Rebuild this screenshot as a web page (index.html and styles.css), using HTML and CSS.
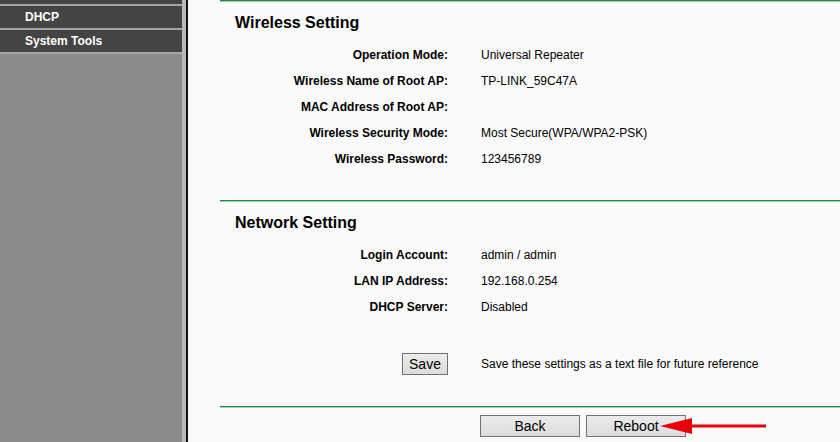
FILE: index.html
```html
<!DOCTYPE html>
<html>
<head>
<meta charset="utf-8">
<link rel="stylesheet" href="styles.css">
</head>
<body>
<div class="page">
  <div class="sidebar">
    <div class="menu-item stub"></div>
    <div class="menu-item">DHCP</div>
    <div class="menu-item">System Tools</div>
  </div>
  <div class="strip"></div>
  <div class="divider"></div>
  <div class="content">
    <section class="section s1">
      <h2 class="heading">Wireless Setting</h2>
      <div class="rows">
        <div class="label">Operation Mode:</div><div class="value">Universal Repeater</div>
        <div class="label">Wireless Name of Root AP:</div><div class="value">TP-LINK_59C47A</div>
        <div class="label">MAC Address of Root AP:</div><div class="value"></div>
        <div class="label">Wireless Security Mode:</div><div class="value">Most Secure(WPA/WPA2-PSK)</div>
        <div class="label">Wireless Password:</div><div class="value">123456789</div>
      </div>
    </section>
    <section class="section s2">
      <h2 class="heading">Network Setting</h2>
      <div class="rows">
        <div class="label">Login Account:</div><div class="value">admin / admin</div>
        <div class="label">LAN IP Address:</div><div class="value">192.168.0.254</div>
        <div class="label">DHCP Server:</div><div class="value">Disabled</div>
      </div>
      <div class="rows save-row">
        <div class="label"><button class="btn save">Save</button></div><div class="value">Save these settings as a text file for future reference</div>
      </div>
    </section>
    <section class="section s3">
      <button class="btn wide">Back</button>
      <button class="btn wide">Reboot</button>
      <svg class="arrow" width="110" height="20" viewBox="0 0 110 20">
        <polygon points="0,10 32,2 32,18" fill="#e8000a"/>
        <rect x="30" y="8.5" width="76" height="3" fill="#e8000a"/>
      </svg>
    </section>
  </div>
</div>
</body>
</html>
```

FILE: styles.css
```css
html, body {
  margin: 0;
  padding: 0;
  background: #fafafa;
  font-family: "Liberation Sans", Arial, sans-serif;
}
.page {
  display: flex;
  width: 840px;
  height: 442px;
  overflow: hidden;
}
.sidebar {
  width: 182px;
  background: #8c8c8c;
  display: flex;
  flex-direction: column;
  gap: 2px;
  flex-shrink: 0;
}
.menu-item {
  background: #444444;
  color: #ffffff;
  font-weight: bold;
  font-size: 12px;
  height: 22px;
  line-height: 22px;
  padding-left: 25px;
  box-shadow: 0 2px 0 #a6a6a6;
}
.menu-item.stub {
  height: 4px;
}
.strip {
  width: 4px;
  background: #b9b9b9;
  flex-shrink: 0;
}
.divider {
  width: 2px;
  background: #111111;
  flex-shrink: 0;
}
.content {
  flex: 1;
  padding-left: 32px;
  background: #fafafa;
}
.section {
  border-top: 1px solid #1f8a48;
  box-shadow: inset 0 1px 0 #9fd0ae;
  position: relative;
}
.s1 { padding: 12px 0 29px 0; height: 158px; }
.s2 { padding: 12px 0 0 0; height: 193px; }
.s3 {
  padding: 8px 0 0 260px;
  display: flex;
  gap: 6px;
  align-items: flex-start;
}
.heading {
  margin: 0 0 9px 15px;
  font-size: 16px;
  line-height: 20px;
  font-weight: bold;
  color: #000;
}
.rows {
  display: grid;
  grid-template-columns: 228px 1fr;
  column-gap: 33px;
  grid-auto-rows: 26px;
  font-size: 12px;
  color: #000;
}
.label {
  text-align: right;
  font-weight: bold;
  line-height: 26px;
}
.value {
  line-height: 26px;
}
.save-row {
  margin-top: 31px;
}
.save-row .label {
  display: flex;
  justify-content: flex-end;
  align-items: center;
}
.btn {
  font-family: "Liberation Sans", Arial, sans-serif;
  font-size: 14px;
  color: #000;
  background: linear-gradient(#ececec, #dcdcdc);
  border: 1px solid #717171;
  padding: 0;
  margin: 0;
  height: 22px;
  line-height: 20px;
}
.btn.save {
  width: 46px;
}
.btn.wide {
  width: 100px;
}
.arrow {
  position: absolute;
  left: 440px;
  top: 9px;
}
```
